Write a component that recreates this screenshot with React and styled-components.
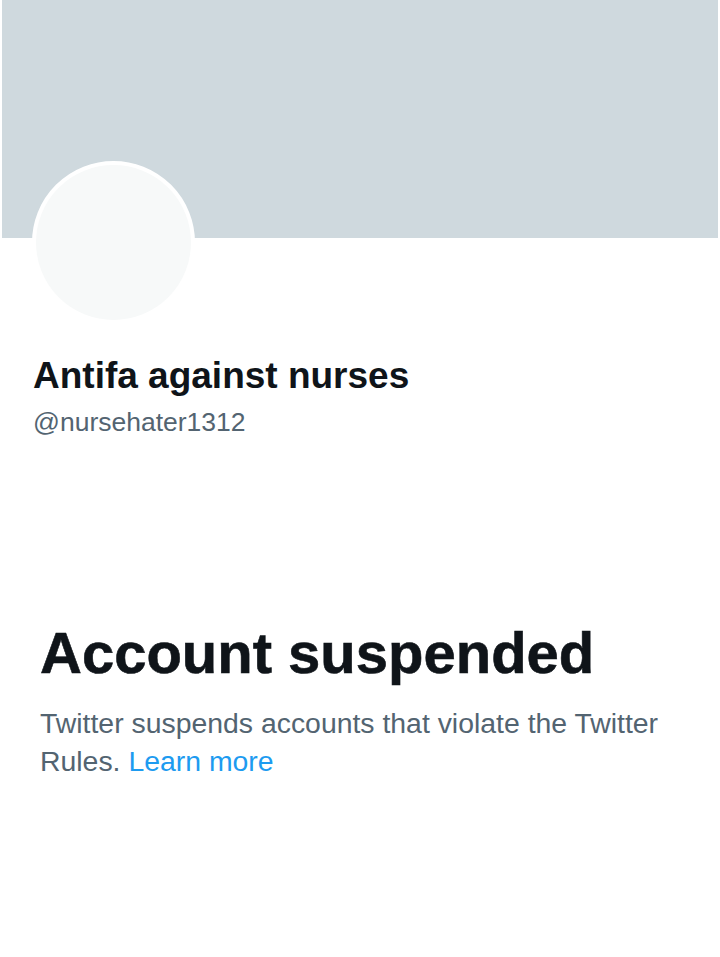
import React from "react";
import styled, { createGlobalStyle } from "styled-components";

const Global = createGlobalStyle`
  html, body { margin: 0; padding: 0; background: #ffffff; }
  body { font-family: "Liberation Sans", Arial, sans-serif; }
`;

const Page = styled.div`
  width: 720px;
  min-height: 957px;
  background: #ffffff;
  display: flex;
  flex-direction: column;
`;

const Banner = styled.div`
  height: 238px;
  margin: 0 2px;
  background: #cfd9de;
`;

const Profile = styled.section`
  display: flex;
  flex-direction: column;
  padding: 0 32px;
`;

const Avatar = styled.div`
  width: 155px;
  height: 155px;
  margin-top: -77px;
  border: 4px solid #ffffff;
  border-radius: 50%;
  background: #f7f9f9;
`;

const Name = styled.h1`
  margin: 30px 0 0 1px;
  font-size: 37px;
  line-height: 44px;
  font-weight: 700;
  color: #0f1419;
`;

const Handle = styled.div`
  margin: 8px 0 0 1px;
  font-size: 26.5px;
  line-height: 32px;
  color: #536471;
`;

const Notice = styled.section`
  display: flex;
  flex-direction: column;
  padding: 181px 40px 0 40px;
`;

const Title = styled.h2`
  margin: 0;
  font-size: 58px;
  line-height: 68px;
  font-weight: 700;
  color: #0f1419;
  -webkit-text-stroke: 0.6px #0f1419;
`;

const Text = styled.p`
  margin: 17px 0 0 0;
  font-size: 28.4px;
  line-height: 38px;
  color: #536471;
`;

const Link = styled.a`
  color: #1d9bf0;
  text-decoration: none;
`;

export default function App() {
  return (
    <Page>
      <Global />
      <Banner />
      <Profile>
        <Avatar />
        <Name>Antifa against nurses</Name>
        <Handle>@nursehater1312</Handle>
      </Profile>
      <Notice>
        <Title>Account suspended</Title>
        <Text>
          Twitter suspends accounts that violate the Twitter Rules. <Link href="#">Learn more</Link>
        </Text>
      </Notice>
    </Page>
  );
}
